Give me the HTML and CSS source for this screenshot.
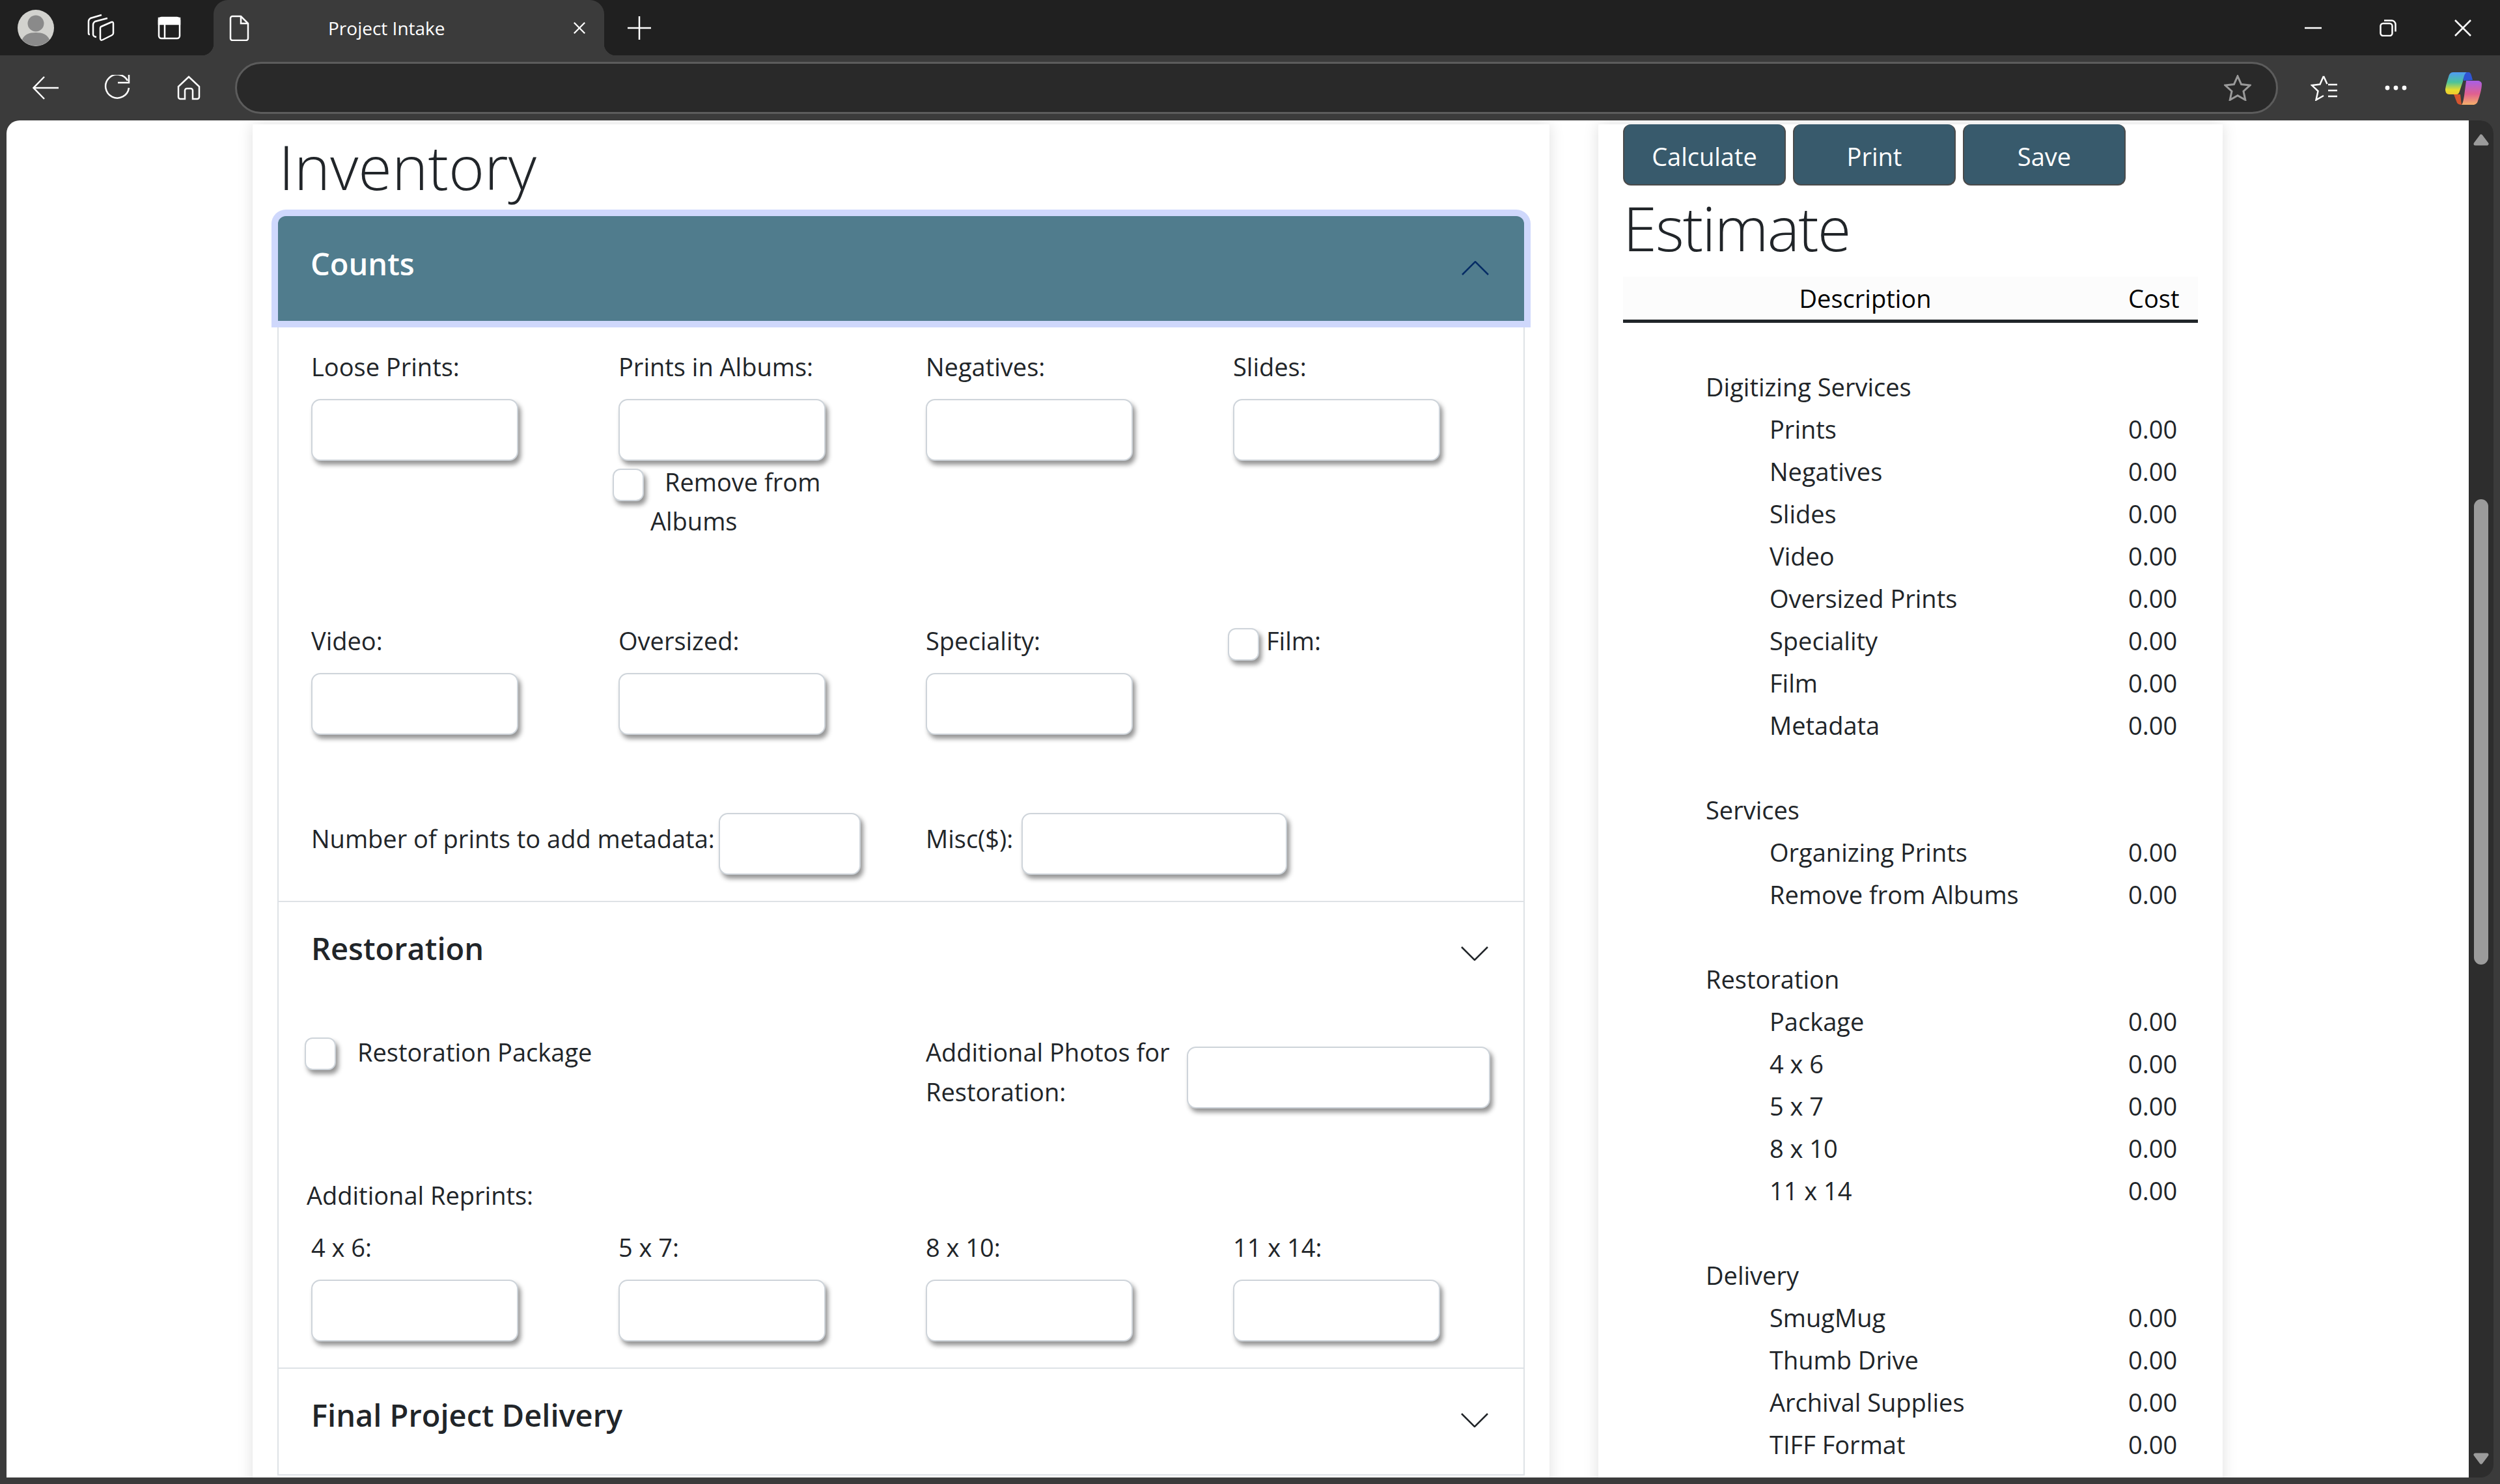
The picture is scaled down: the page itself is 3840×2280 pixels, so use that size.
FILE: index.html
```html
<!DOCTYPE html>
<html lang="en">
<head>
    <meta charset="UTF-8">
    <title>Project Intake</title>
    <link rel="stylesheet" href="styles.css">
</head>
<body>
<div class="titlebar">
    <div class="tb-left">
        <svg class="avatar" viewBox="0 0 56 56"><circle cx="28" cy="28" r="28" fill="#d2d2ce"/><circle cx="28" cy="21" r="12.500" fill="#8a8a8a"/><path d="M7 46c3-8 11-11 21-11s18 3 21 11a28 28 0 0 1-42 0z" fill="#8a8a8a"/></svg>
        <svg class="ic ic-coll" viewBox="0 0 45 45"><path d="M6 33Q4 33 4 31V13Q4 10 7 8L24 3M16 37Q11 36 11 33V18Q11 15 14 13L33 8M23 21 39 14Q42 13 42 16V31Q42 33 40 34L26 41Q22 43 22 39V23Q22 22 23 21z"/></svg>
        <svg class="ic ic-vtab" viewBox="0 0 36 36"><rect x="2" y="2" width="32" height="32" rx="4"/><path d="M2 3h32v9H2z" fill="#fff"/><path d="M11 12v22"/></svg>
    </div>
    <div class="tab">
        <svg class="ic ic-page" viewBox="0 0 32 40"><path d="M3 5a3 3 0 0 1 3-3h13l11 11v23a3 3 0 0 1-3 3H6a3 3 0 0 1-3-3z"/><path d="M19 2v11h11"/></svg>
        <span class="tab-title">Project Intake</span>
        <svg class="ic ic-x" viewBox="0 0 22 22"><path d="M2 2l18 18M20 2 2 20"/></svg>
    </div>
    <svg class="ic ic-plus" viewBox="0 0 36 36"><path d="M18 0v36M0 18h36"/></svg>
    <div class="winctl">
        <svg class="ic ic-min" viewBox="0 0 26 4"><path d="M0 2h26"/></svg>
        <svg class="ic ic-restore" viewBox="0 0 26 26"><rect x="1.5" y="6" width="18" height="19" rx="4"/><path d="M7 1.500h11a6 6 0 0 1 6.500 6v11"/></svg>
        <svg class="ic ic-close" viewBox="0 0 26 26"><path d="M1 1l24 24M25 1 1 25"/></svg>
    </div>
</div>
<div class="toolbar">
    <svg class="ic ic-back" viewBox="0 0 40 36"><path d="M40 18H2M18 1 1.500 18 18 35"/></svg>
    <svg class="ic ic-reload" viewBox="0 0 40 40"><path d="M36 9A18 18 0 1 0 38 20"/><path d="M38 0v12H21"/></svg>
    <svg class="ic ic-home" viewBox="0 0 36 38"><path d="M18 2 2 17v16a3 3 0 0 0 3 3h7V23a3 3 0 0 1 3-3h6a3 3 0 0 1 3 3v13h7a3 3 0 0 0 3-3V17z"/></svg>
    <div class="addr">
        <svg class="ic-star" viewBox="0 0 42 40"><path d="M21 2l5.600 12.500 13.400 1.500-10 9.200 2.800 13.300L21 31.800 9.200 38.500 12 25.200 2 16l13.400-1.500z"/></svg>
    </div>
    <svg class="ic ic-fav" viewBox="0 0 42 40"><path d="M20 2l-5.500 12.500L2 16l9.500 9-3 13.500L20 32M20 2l5.500 12M27 15h14M27 24h14M27 33h14"/></svg>
    <svg class="ic-dots" viewBox="0 0 34 8"><circle cx="4" cy="4" r="3.400"/><circle cx="17" cy="4" r="3.400"/><circle cx="30" cy="4" r="3.400"/></svg>
    <svg class="ic-copilot" viewBox="0 0 56 51">
        <defs>
            <linearGradient id="cpA" x1="0" y1="0" x2="0" y2="1"><stop offset="0" stop-color="#4f9cf5"/><stop offset=".45" stop-color="#4cc39a"/><stop offset=".8" stop-color="#e7dc2e"/><stop offset="1" stop-color="#f0c92e"/></linearGradient>
            <linearGradient id="cpB" x1="0" y1="0" x2="0" y2="1"><stop offset="0" stop-color="#a85fe6"/><stop offset=".55" stop-color="#e0608f"/><stop offset="1" stop-color="#f5b06a"/></linearGradient>
        </defs>
        <path d="M28 1h8c3 0 4 4 6 12l-14 1z" fill="#2f55d4"/>
        <path d="M12 1h21c-3 1-5 7-6 14l-5 15c-1 3-2 5-5 5H6c-4 0-6-3-6-8C1 20 3 14 5 8c1-4 3-7 7-7z" fill="url(#cpA)"/>
        <path d="M13 35h10l2 16c-3 0-6-1-7-3z" fill="#d4552f"/>
        <path d="M32 14h17c4 0 7 2 7 5 0 8-3 18-6 26-1 4-4 6-8 6H25c2-2 3-8 4-14z" fill="url(#cpB)"/>
    </svg>
</div>
<div class="viewport">
    <div class="page">
        <main class="inventory card">
            <h2 class="display">Inventory</h2>
            <div class="accordion">
                <section class="acc-item">
                    <div class="acc-head open">
                        <span>Counts</span>
                        <svg class="chev" viewBox="0 0 42 22"><path d="M1 21 21 1l20 20"/></svg>
                    </div>
                    <div class="acc-body counts">
                        <div class="four row-one">
                            <div class="field"><label>Loose Prints:</label><span class="box"></span></div>
                            <div class="field">
                                <label>Prints in Albums:</label><span class="box"></span>
                                <div class="remove"><span class="check"></span><span class="remove-text">Remove from Albums</span></div>
                            </div>
                            <div class="field"><label>Negatives:</label><span class="box"></span></div>
                            <div class="field"><label>Slides:</label><span class="box"></span></div>
                        </div>
                        <div class="four row-two">
                            <div class="field"><label>Video:</label><span class="box"></span></div>
                            <div class="field"><label>Oversized:</label><span class="box"></span></div>
                            <div class="field"><label>Speciality:</label><span class="box"></span></div>
                            <div class="film"><span class="check"></span><label>Film:</label></div>
                        </div>
                        <div class="two row-three">
                            <div class="inline"><label>Number of prints to add metadata:</label><span class="box box-meta"></span></div>
                            <div class="inline"><label>Misc($):</label><span class="box box-misc"></span></div>
                        </div>
                    </div>
                </section>
                <section class="acc-item">
                    <div class="acc-head">
                        <span>Restoration</span>
                        <svg class="chev" viewBox="0 0 42 22"><path d="M1 1l20 20L41 1"/></svg>
                    </div>
                    <div class="acc-body restoration">
                        <div class="two row-package">
                            <div class="package"><span class="check"></span><label>Restoration Package</label></div>
                            <div class="inline inline-top"><label class="photos">Additional Photos for Restoration:</label><span class="box box-photos"></span></div>
                        </div>
                        <div class="reprints">Additional Reprints:</div>
                        <div class="four">
                            <div class="field"><label>4 x 6:</label><span class="box"></span></div>
                            <div class="field"><label>5 x 7:</label><span class="box"></span></div>
                            <div class="field"><label>8 x 10:</label><span class="box"></span></div>
                            <div class="field"><label>11 x 14:</label><span class="box"></span></div>
                        </div>
                    </div>
                </section>
                <section class="acc-item">
                    <div class="acc-head">
                        <span>Final Project Delivery</span>
                        <svg class="chev" viewBox="0 0 42 22"><path d="M1 1l20 20L41 1"/></svg>
                    </div>
                </section>
            </div>
        </main>
        <aside class="estimate card">
            <div class="actions">
                <button>Calculate</button>
                <button>Print</button>
                <button>Save</button>
            </div>
            <h2 class="display">Estimate</h2>
            <table class="costs">
                <thead>
                    <tr><th class="desc">Description</th><th class="cost">Cost</th></tr>
                </thead>
                <tbody>
                    <tr><td>&nbsp;</td><td></td></tr>
                    <tr><td class="grp">Digitizing Services</td><td></td></tr>
                    <tr><td class="sub">Prints</td><td class="cost">0.00</td></tr>
                    <tr><td class="sub">Negatives</td><td class="cost">0.00</td></tr>
                    <tr><td class="sub">Slides</td><td class="cost">0.00</td></tr>
                    <tr><td class="sub">Video</td><td class="cost">0.00</td></tr>
                    <tr><td class="sub">Oversized Prints</td><td class="cost">0.00</td></tr>
                    <tr><td class="sub">Speciality</td><td class="cost">0.00</td></tr>
                    <tr><td class="sub">Film</td><td class="cost">0.00</td></tr>
                    <tr><td class="sub">Metadata</td><td class="cost">0.00</td></tr>
                    <tr><td>&nbsp;</td><td></td></tr>
                    <tr><td class="grp">Services</td><td></td></tr>
                    <tr><td class="sub">Organizing Prints</td><td class="cost">0.00</td></tr>
                    <tr><td class="sub">Remove from Albums</td><td class="cost">0.00</td></tr>
                    <tr><td>&nbsp;</td><td></td></tr>
                    <tr><td class="grp">Restoration</td><td></td></tr>
                    <tr><td class="sub">Package</td><td class="cost">0.00</td></tr>
                    <tr><td class="sub">4 x 6</td><td class="cost">0.00</td></tr>
                    <tr><td class="sub">5 x 7</td><td class="cost">0.00</td></tr>
                    <tr><td class="sub">8 x 10</td><td class="cost">0.00</td></tr>
                    <tr><td class="sub">11 x 14</td><td class="cost">0.00</td></tr>
                    <tr><td>&nbsp;</td><td></td></tr>
                    <tr><td class="grp">Delivery</td><td></td></tr>
                    <tr><td class="sub">SmugMug</td><td class="cost">0.00</td></tr>
                    <tr><td class="sub">Thumb Drive</td><td class="cost">0.00</td></tr>
                    <tr><td class="sub">Archival Supplies</td><td class="cost">0.00</td></tr>
                    <tr><td class="sub">TIFF Format</td><td class="cost">0.00</td></tr>
                </tbody>
            </table>
        </aside>
    </div>
    <div class="scrollbar">
        <svg class="arrow arrow-up" viewBox="0 0 24 18"><path d="M12 3 21 15H3z"/></svg>
        <span class="thumb"></span>
        <svg class="arrow arrow-down" viewBox="0 0 24 18"><path d="M3 3h18L12 15z"/></svg>
    </div>
</div>
</body>
</html>
```

FILE: styles.css
```css
* {
    margin: 0;
    padding: 0;
    box-sizing: border-box;
}
html, body {
    width: 3840px;
    height: 2280px;
    overflow: hidden;
}
body {
    background: #3b3b3b;
    font-family: "Open Sans", "Noto Sans", "Liberation Sans", sans-serif;
    color: #212529;
    display: flex;
    flex-direction: column;
}

/* browser chrome */
.titlebar {
    height: 85px;
    background: #202020;
    display: flex;
    align-items: center;
    flex: none;
}
.tb-left {
    width: 328px;
    display: flex;
    align-items: center;
    flex: none;
}
.ic {
    fill: none;
    stroke: #fff;
    stroke-width: 2.5;
    flex: none;
}
.avatar {
    width: 56px;
    height: 56px;
    margin-left: 27px;
}
.ic-coll {
    width: 45px;
    height: 45px;
    margin-left: 49px;
}
.ic-vtab {
    width: 36px;
    height: 36px;
    margin-left: 65px;
}
.tab {
    width: 600px;
    height: 85px;
    background: #3b3b3b;
    border-radius: 22px 22px 0 0;
    display: flex;
    align-items: center;
    flex: none;
    color: #fff;
    font-size: 28px;
    position: relative;
}
.tab::before, .tab::after {
    content: "";
    position: absolute;
    bottom: 0;
    width: 18px;
    height: 18px;
}
.tab::before {
    left: -18px;
    background: radial-gradient(circle at 0 0, transparent 18px, #3b3b3b 18.5px);
}
.tab::after {
    right: -18px;
    background: radial-gradient(circle at 100% 0, transparent 18px, #3b3b3b 18.5px);
}
.ic-page {
    width: 32px;
    height: 40px;
    margin-left: 23px;
}
.tab-title {
    margin-left: 121px;
    width: 376px;
}
.ic-x {
    width: 20px;
    height: 20px;
}
.ic-plus {
    width: 36px;
    height: 36px;
    margin-left: 36px;
}
.winctl {
    margin-left: auto;
    display: flex;
    align-items: center;
    width: 300px;
}
.ic-min {
    width: 26px;
    height: 4px;
}
.ic-restore {
    width: 26px;
    height: 26px;
    margin-left: 89px;
}
.ic-close {
    width: 26px;
    height: 26px;
    margin-left: 89px;
}
.toolbar {
    height: 100px;
    display: flex;
    align-items: center;
    flex: none;
}
.ic-back {
    width: 40px;
    height: 36px;
    margin-left: 50px;
}
.ic-reload {
    width: 40px;
    height: 40px;
    margin-left: 70px;
}
.ic-home {
    width: 36px;
    height: 38px;
    margin-left: 72px;
}
.addr {
    width: 3138px;
    height: 80px;
    margin-left: 53px;
    background: #292929;
    border: 3px solid #5c5c5c;
    border-radius: 40px;
    display: flex;
    align-items: center;
    justify-content: flex-end;
    padding-right: 38px;
}
.ic-star {
    width: 42px;
    height: 40px;
    fill: none;
    stroke: #9a9a9a;
    stroke-width: 3;
}
.ic-fav {
    width: 42px;
    height: 40px;
    margin-left: 50px;
}
.ic-dots {
    width: 34px;
    height: 8px;
    margin-left: 72px;
    fill: #fff;
    flex: none;
}
.ic-copilot {
    width: 56px;
    height: 51px;
    margin-left: 59px;
    flex: none;
}

/* page area */
.viewport {
    margin-left: 10px;
    width: 3820px;
    height: 2085px;
    display: flex;
    flex: none;
    border-radius: 20px 20px 0 0;
    overflow: hidden;
}
.page {
    width: 3782px;
    background: #fff;
    display: flex;
    gap: 75px;
    padding: 6px 0 0 378px;
    overflow: hidden;
}
.card {
    background: #fff;
    box-shadow: 0 0 22px rgba(0, 0, 0, 0.13);
    flex: none;
}
.inventory {
    width: 1992px;
    height: 2200px;
    padding: 0 38px;
}
.estimate {
    width: 959px;
    height: 2200px;
    padding: 0 38px;
}
.display {
    font-size: 94px;
    font-weight: 300;
    line-height: 120px;
    padding-left: 2px;
}
.inventory .display {
    padding-top: 5px;
}
.accordion {
    margin-top: 16px;
    width: 1916px;
}
.acc-item {
    border-left: 2.5px solid #dee2e6;
    border-right: 2.5px solid #dee2e6;
    border-bottom: 2.5px solid #dee2e6;
}
.acc-head {
    height: 162px;
    padding: 0 54px 20px 50px;
    font-size: 47px;
    font-weight: 600;
    display: flex;
    align-items: center;
    justify-content: space-between;
}
.acc-head.open {
    height: 161px;
    margin: 0 -1px;
    padding-bottom: 16px;
    background: #507c8d;
    color: #fff;
    border-radius: 12px 12px 0 0;
    box-shadow: 0 0 0 10px #cfd8fc;
    position: relative;
}
.chev {
    width: 42px;
    height: 22px;
    fill: none;
    stroke: #212529;
    stroke-width: 2.5;
    margin-top: 15px;
}
.open .chev {
    stroke: #052c65;
}
.acc-body {
    padding: 40px 0 0 50px;
    font-size: 38px;
    line-height: 60px;
}
.four {
    display: grid;
    grid-template-columns: repeat(4, 472px);
}
.two {
    display: grid;
    grid-template-columns: repeat(2, 944px);
}
.field label {
    display: block;
    margin-bottom: 20px;
}
.box {
    display: block;
    width: 318px;
    height: 95px;
    background: #fff;
    border: 2.5px solid #ced4da;
    border-radius: 14px;
    box-shadow: 4px 6px 7px rgba(0, 0, 0, 0.42);
    flex: none;
}
.check {
    display: block;
    width: 48px;
    height: 50px;
    background: #fff;
    border: 2.5px solid #ced4da;
    border-radius: 12px;
    box-shadow: 4px 6px 7px rgba(0, 0, 0, 0.42);
    flex: none;
}
.row-one {
    height: 421px;
}
.remove {
    margin-top: 2px;
    position: relative;
    width: 320px;
    padding-left: 49px;
    text-indent: 22px;
}
.remove .check {
    position: absolute;
    left: -9px;
    top: 10px;
}
.film {
    display: flex;
    margin-left: -8px;
    gap: 11px;
    align-items: flex-start;
}
.film .check {
    margin-top: 11px;
}
.row-two {
    height: 294px;
}
.inline {
    display: flex;
    align-items: center;
    gap: 6px;
}
.inline label {
    margin-bottom: 16px;
}
.box-meta {
    width: 218px;
}
.box-misc {
    width: 408px;
    margin-left: 7px;
}
.row-three {
    height: 96px;
}
.row-package {
    height: 220px;
}
.package {
    display: flex;
    gap: 33px;
    margin-left: -10px;
    align-items: flex-start;
}
.package .check {
    margin-top: 8px;
}
.inline label.photos {
    width: 395px;
    line-height: 61px;
    flex: none;
    margin-bottom: 0;
}
.inline-top {
    align-items: flex-start;
}
.box-photos {
    width: 466px;
    margin-top: 22px;
}
.reprints {
    margin-left: -7px;
    margin-bottom: 20px;
}
.counts {
    padding-bottom: 40px;
}
.restoration {
    padding-top: 38px;
    padding-bottom: 40px;
}

/* estimate side */
.actions {
    display: flex;
    gap: 11px;
}
.actions button {
    width: 250px;
    height: 94px;
    padding-top: 5px;
    background: #385a6c;
    border: 2.5px solid #4a4a4a;
    border-top: none;
    border-radius: 12px;
    color: #fff;
    font-family: inherit;
    font-size: 38px;
}
.estimate .display {
    margin-top: 5px;
    padding-left: 0;
    letter-spacing: -2px;
}
.costs {
    width: 883px;
    margin-top: 15px;
    border-collapse: collapse;
    font-size: 38px;
    table-layout: fixed;
}
.costs th {
    font-weight: 400;
    color: #000;
    background: #fcfcfc;
    height: 68px;
    border-bottom: 5px solid #212529;
}
.costs td {
    height: 65px;
    padding: 0;
}
.costs tbody tr:first-child td {
    height: 68px;
}
.costs th.desc {
    width: 744px;
    text-align: center;
}
.costs .cost {
    text-align: left;
    padding-left: 32px;
}
.costs .grp {
    padding-left: 127px;
}
.costs .sub {
    padding-left: 225px;
}

/* scrollbar */
.scrollbar {
    width: 38px;
    background: #2d2d2d;
    position: relative;
    border-radius: 0 20px 20px 0;
    flex: none;
}
.arrow {
    position: absolute;
    left: 7px;
    width: 24px;
    height: 18px;
    fill: #9b9b9b;
    stroke: #9b9b9b;
    stroke-width: 5;
    stroke-linejoin: round;
}
.arrow-up {
    top: 21px;
}
.arrow-down {
    bottom: 20px;
}
.thumb {
    position: absolute;
    left: 8px;
    top: 582px;
    width: 22px;
    height: 715px;
    background: #9b9b9b;
    border-radius: 11px;
}
```
